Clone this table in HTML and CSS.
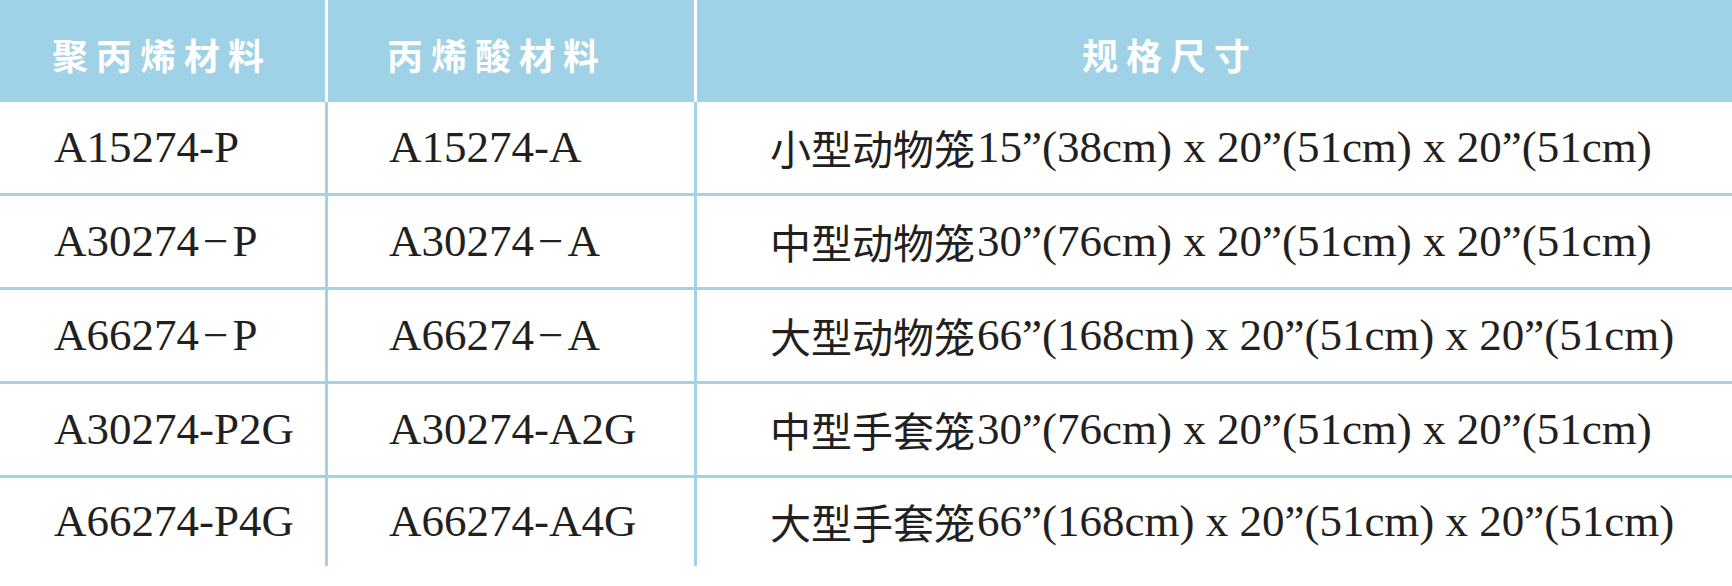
FILE: index.html
```html
<!DOCTYPE html>
<html lang="zh-CN">
<head>
<meta charset="utf-8">
<title>规格</title>
<link rel="stylesheet" href="styles.css">
</head>
<body>
<div class="table">
  <div class="row head">
    <div class="cell c1">聚丙烯材料</div>
    <div class="cell c2">丙烯酸材料</div>
    <div class="cell c3">规格尺寸</div>
  </div>
  <div class="row">
    <div class="cell c1">A15274-P</div>
    <div class="cell c2">A15274-A</div>
    <div class="cell c3"><span class="cjk">小型动物笼</span>15”(38cm) x 20”(51cm) x 20”(51cm)</div>
  </div>
  <div class="row">
    <div class="cell c1">A30274<span class="minus">−</span>P</div>
    <div class="cell c2">A30274<span class="minus">−</span>A</div>
    <div class="cell c3"><span class="cjk">中型动物笼</span>30”(76cm) x 20”(51cm) x 20”(51cm)</div>
  </div>
  <div class="row">
    <div class="cell c1">A66274<span class="minus">−</span>P</div>
    <div class="cell c2">A66274<span class="minus">−</span>A</div>
    <div class="cell c3"><span class="cjk">大型动物笼</span>66”(168cm) x 20”(51cm) x 20”(51cm)</div>
  </div>
  <div class="row">
    <div class="cell c1">A30274-P2G</div>
    <div class="cell c2">A30274-A2G</div>
    <div class="cell c3"><span class="cjk">中型手套笼</span>30”(76cm) x 20”(51cm) x 20”(51cm)</div>
  </div>
  <div class="row last">
    <div class="cell c1">A66274-P4G</div>
    <div class="cell c2">A66274-A4G</div>
    <div class="cell c3"><span class="cjk">大型手套笼</span>66”(168cm) x 20”(51cm) x 20”(51cm)</div>
  </div>
</div>
</body>
</html>
```
FILE: styles.css
```css
html, body {
  margin: 0;
  padding: 0;
  background: #ffffff;
}
body {
  width: 1732px;
  height: 586px;
  overflow: hidden;
  font-family: "Liberation Serif", "Noto Sans CJK SC", serif;
  color: #231f20;
}
.table {
  display: flex;
  flex-direction: column;
}
.row {
  display: grid;
  grid-template-columns: 328px 369px 1fr;
  height: 94px;
}
.row .cell {
  display: flex;
  align-items: center;
  border-right: 3px solid #a2d3e5;
  border-bottom: 3px solid #a2d3e5;
  font-size: 45px;
  white-space: nowrap;
  padding-bottom: 2px;
  box-sizing: border-box;
}
.row .cell.c3 {
  border-right: none;
}
.row.last {
  height: 88px;
}
.row.last .cell {
  border-bottom: none;
}
.row .c1 { padding-left: 54px; }
.row .c2 { padding-left: 61px; }
.row .c3 { padding-left: 73px; }
.minus {
  margin: 0 4px;
}
.cjk {
  font-family: "Noto Sans CJK SC", sans-serif;
  font-size: 41px;
  font-weight: 400;
  margin-right: 2px;
}
.row.head {
  height: 102px;
  background: #9fd2e6;
}
.row.head .cell {
  border-bottom: none;
  border-right: 3px solid #ffffff;
  font-family: "Noto Sans CJK SC", sans-serif;
  font-weight: 700;
  font-size: 36px;
  letter-spacing: 8px;
  color: #ffffff;
  padding-top: 6px;
  padding-bottom: 0;
}
.row.head .c1 { padding-left: 52px; }
.row.head .c2 { padding-left: 59px; }
.row.head .c3 { padding-left: 385px; border-right: none; }
```
